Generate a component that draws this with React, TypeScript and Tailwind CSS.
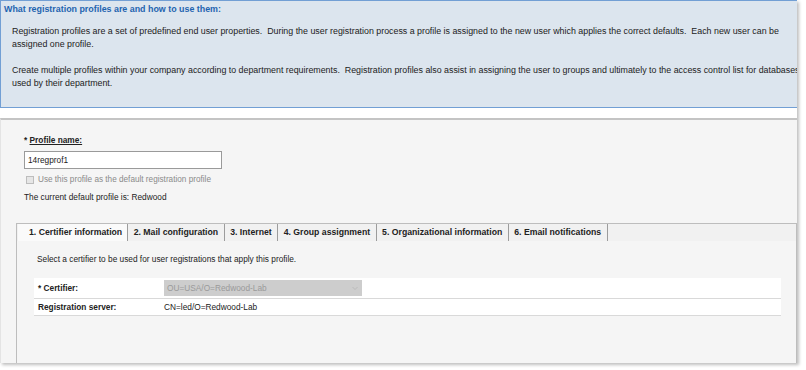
import React from "react";

const tabs = [
  "1. Certifier information",
  "2. Mail configuration",
  "3. Internet",
  "4. Group assignment",
  "5. Organizational information",
  "6. Email notifications",
];

export default function App() {
  return (
    <div className="w-[806px] h-[370px] bg-white font-['Liberation_Sans',Arial,sans-serif] text-[8.3px] leading-[12px] text-[#222]">
      <div className="w-[797px] h-[363px] flex flex-col shadow-[2px_2px_3px_rgba(0,0,0,0.25)]">
        {/* Info panel */}
        <div className="h-[108px] bg-[#dce5ee] border border-[#729fd4] border-r-0 pl-[3px] pt-[2px] overflow-hidden">
          <div className="font-bold text-[8.9px] text-[#1f64b0]">
            What registration profiles are and how to use them:
          </div>
          <div className="pl-[8px] pr-[6px] mt-[10px] text-[8.85px] leading-[12.5px]">
            <p>
              Registration profiles are a set of predefined end user properties.&nbsp; During the user registration process a profile is assigned to the new user which applies the correct defaults.&nbsp; Each new user can be assigned one profile.
            </p>
            <p className="mt-[14px] whitespace-nowrap">
              Create multiple profiles within your company according to department requirements.&nbsp; Registration profiles also assist in assigning the user to groups and ultimately to the access control list for databases
              <br />
              used by their department.
            </p>
          </div>
        </div>
        {/* white strip */}
        <div className="h-[10px] bg-white" />
        {/* form area */}
        <div className="flex-1 bg-[#f5f5f5] border-t-2 border-[#c4c4c4] border-l border-l-[#e4e4e4] flex flex-col">
          <div className="pl-[23px] pt-[14px]">
            <div className="font-bold">
              * <span className="underline">Profile name:</span>
            </div>
            <div className="mt-[5px] w-[198px] h-[18px] border border-[#9a9a9a] bg-white pl-[3px] leading-[16px]">
              14regprof1
            </div>
            <div className="mt-[5px] flex items-center gap-[4px] pl-[2px] text-[#8a8a8a] text-[8.2px]">
              <span className="w-[8px] h-[8px] border border-[#bdbdbd] bg-[#e6e6e6] inline-block" />
              <span>Use this profile as the default registration profile</span>
            </div>
            <div className="mt-[5px]">The current default profile is: Redwood</div>
          </div>
          {/* tab container */}
          <div className="ml-[15px] mt-[20px] flex-1 border border-[#bdbdbd] border-b-0 flex flex-col">
            <div className="flex h-[17px] bg-[#f1f1f1] pl-[1px] text-[8.7px]">
              {tabs.map((t, i) => (
                <div
                  key={t}
                  className={
                    i === 0
                      ? "font-bold pl-[11px] pr-[5px] leading-[17px] bg-[#fafafa] border-r border-[#9c9c9c]"
                      : "font-bold pl-[5.5px] pr-[5.5px] leading-[17px] border-r border-[#9c9c9c]"
                  }
                >
                  {t}
                </div>
              ))}
            </div>
            <div className="pl-[20px] pt-[12px]">Select a certifier to be used for user registrations that apply this profile.</div>
            <div className="ml-[17px] mr-[15px] mt-[13px] bg-white">
              <div className="flex items-center h-[21px] border-b border-[#d9d9d9]">
                <div className="w-[130px] pl-[4px] font-bold">* Certifier:</div>
                <div className="w-[198px] h-[16px] bg-[#cdcdcd] pl-[3px] leading-[16px] text-[#9a9a9a] flex justify-between pr-[4px]">
                  <span>OU=USA/O=Redwood-Lab</span>
                  <svg width="6" height="16" viewBox="0 0 6 16"><path d="M0.5 7 L3 9.5 L5.5 7" fill="none" stroke="#b5b5b5" strokeWidth="0.8" /></svg>
                </div>
              </div>
              <div className="flex items-center h-[17px] border-b border-[#d9d9d9]">
                <div className="w-[130px] pl-[4px] font-bold">Registration server:</div>
                <div>CN=led/O=Redwood-Lab</div>
              </div>
            </div>
          </div>
        </div>
      </div>
    </div>
  );
}
